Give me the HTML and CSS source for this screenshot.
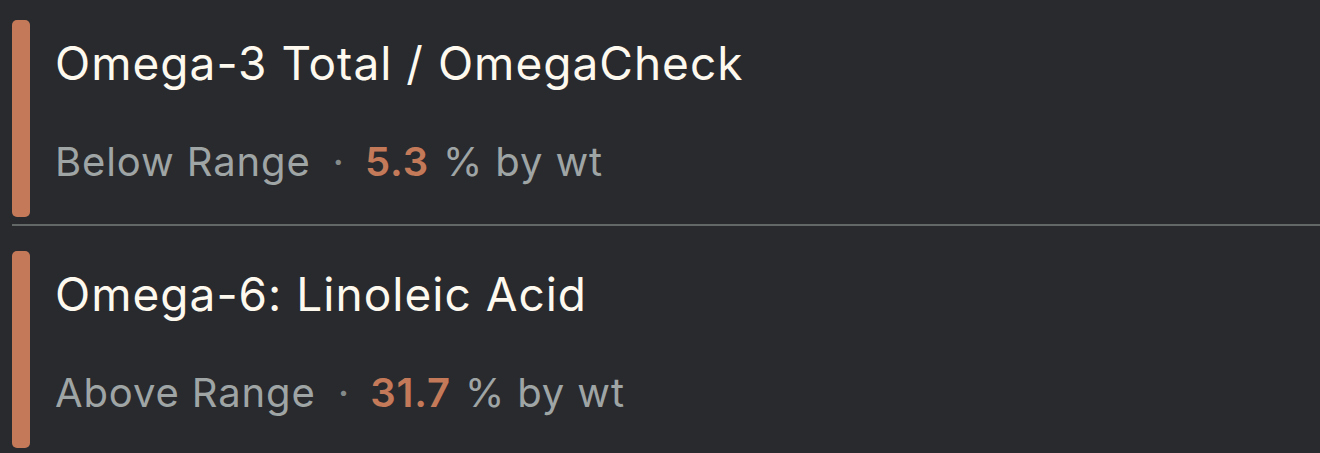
FILE: index.html
```html
<!DOCTYPE html>
<html>
<head>
<meta charset="utf-8">
<link rel="stylesheet" href="styles.css">
</head>
<body>
<div class="list">
  <div class="row">
    <div class="bar"></div>
    <div class="content">
      <div class="title">Omega-3 Total / OmegaCheck</div>
      <div class="meta"><span class="label">Below Range</span><span class="dot">·</span><span class="value">5.3</span><span class="unit">% by wt</span></div>
    </div>
  </div>
  <div class="sep"></div>
  <div class="row">
    <div class="bar"></div>
    <div class="content">
      <div class="title">Omega-6: Linoleic Acid</div>
      <div class="meta"><span class="label">Above Range</span><span class="dot">·</span><span class="value">31.7</span><span class="unit">% by wt</span></div>
    </div>
  </div>
</div>
</body>
</html>
```

FILE: styles.css
```css
html, body {
  margin: 0;
  padding: 0;
  background: #292a2e;
  height: 100%;
  overflow: hidden;
}
body {
  font-family: Inter, "Noto Sans", sans-serif;
}
.list {
  padding: 20px 0 0 12px;
}
.row {
  display: flex;
  height: 197px;
}
.bar {
  width: 18px;
  flex: none;
  background: #c47a59;
  border-radius: 5px;
}
.content {
  padding: 15px 0 0 25px;
}
.title {
  font-size: 46px;
  line-height: 56px;
  letter-spacing: 0.022em;
  color: #fdf9ef;
}
.meta {
  margin-top: 47px;
  font-size: 40px;
  line-height: 48px;
  letter-spacing: 0.022em;
  color: #9fa5a5;
  display: flex;
  align-items: baseline;
  white-space: pre;
}
.dot {
  margin: 0 20px 0 22px;
  color: #848a8a;
}
.value {
  color: #c47a59;
  font-weight: 600;
  margin-right: 14px;
}
.sep {
  height: 2px;
  background: #626866;
  margin: 7px 0 25px;
}
```
